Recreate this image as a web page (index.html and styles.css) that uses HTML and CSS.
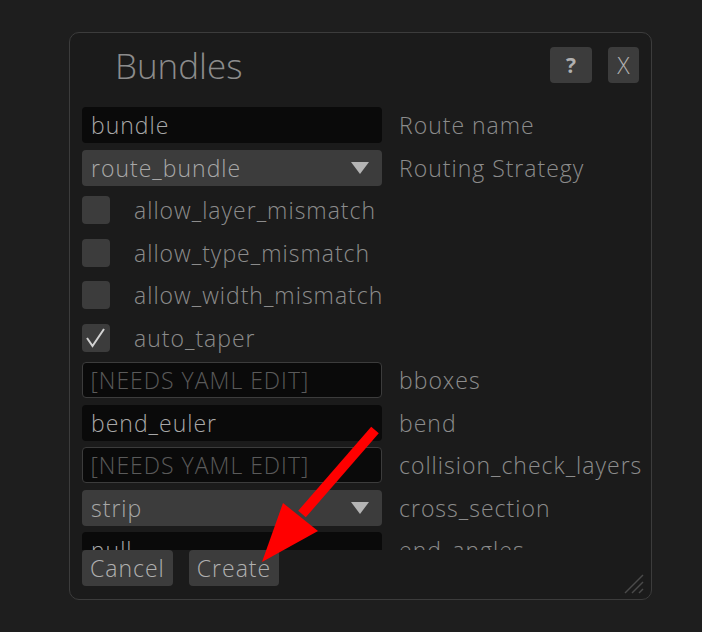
FILE: index.html
```html
<!DOCTYPE html>
<html>
<head>
<meta charset="utf-8">
<link rel="stylesheet" href="styles.css">
</head>
<body>
<div class="window">
  <div class="titlebar">
    <div class="title">Bundles</div>
    <div class="title-buttons">
      <div class="btn help">?</div>
      <div class="btn close">X</div>
    </div>
  </div>
  <div class="scroll">
    <div class="form">
      <div class="field input"><span>bundle</span></div>
      <div class="label">Route name</div>

      <div class="field combo"><span>route_bundle</span><svg class="caret" width="20" height="14" viewBox="0 0 20 14"><polygon points="1,1 19,1 10,13" fill="#b4b4b4"/></svg></div>
      <div class="label">Routing Strategy</div>

      <div class="check-row"><div class="box"></div><span>allow_layer_mismatch</span></div>
      <div class="check-row"><div class="box"></div><span>allow_type_mismatch</span></div>
      <div class="check-row"><div class="box"></div><span>allow_width_mismatch</span></div>
      <div class="check-row"><div class="box"><svg width="28" height="28" viewBox="0 0 28 28"><polyline points="5,14 10.5,22 22,5" fill="none" stroke="#d2d2d2" stroke-width="2"/></svg></div><span>auto_taper</span></div>

      <div class="field input outlined"><span class="ph">[NEEDS YAML EDIT]</span></div>
      <div class="label">bboxes</div>

      <div class="field input"><span>bend_euler</span></div>
      <div class="label">bend</div>

      <div class="field input outlined"><span class="ph">[NEEDS YAML EDIT]</span></div>
      <div class="label">collision_check_layers</div>

      <div class="field combo"><span>strip</span><svg class="caret" width="20" height="14" viewBox="0 0 20 14"><polygon points="1,1 19,1 10,13" fill="#b4b4b4"/></svg></div>
      <div class="label">cross_section</div>

      <div class="field input"><span>null</span></div>
      <div class="label">end_angles</div>
    </div>
  </div>
  <div class="footer">
    <div class="btn action">Cancel</div>
    <div class="btn action">Create</div>
  </div>
  <svg class="grip" width="24" height="24" viewBox="0 0 24 24">
    <line x1="2" y1="22" x2="20" y2="4" stroke="#4a4a4a" stroke-width="1.5"/>
    <line x1="9" y1="22" x2="20" y2="11" stroke="#4a4a4a" stroke-width="1.5"/>
    <line x1="16" y1="22" x2="20" y2="18" stroke="#4a4a4a" stroke-width="1.5"/>
  </svg>
</div>
<svg class="arrow" width="702" height="632" viewBox="0 0 702 632">
  <line x1="375" y1="430" x2="302" y2="514" stroke="#ff0000" stroke-width="10"/>
  <polygon points="283,503 318,531 262,562" fill="#ff0000"/>
</svg>
</body>
</html>
```

FILE: styles.css
```css
html, body {
  margin: 0;
  padding: 0;
  background: #1e1e1e;
  width: 702px;
  height: 632px;
  overflow: hidden;
  font-family: "Open Sans", "Noto Sans", sans-serif;
  font-weight: 300;
}

.window {
  position: relative;
  margin: 32px 0 0 69px;
  width: 581px;
  height: 566px;
  border: 1.5px solid #3c3c3c;
  border-radius: 10px;
  background: #1b1b1b;
  box-sizing: content-box;
}

.titlebar {
  display: flex;
  justify-content: space-between;
  align-items: flex-start;
  padding: 14px 12px 0 45px;
  height: 62px;
  box-sizing: border-box;
}

.title {
  font-size: 35px;
  color: #8c8c8c;
  line-height: 40px;
  margin-top: -1px;
}

.title-buttons {
  display: flex;
  gap: 16px;
}

.btn {
  background: #3c3c3c;
  border-radius: 4px;
  height: 36px;
  display: flex;
  align-items: center;
  justify-content: center;
  color: #b0b0b0;
}

.help {
  width: 42px;
  font-weight: 700;
  font-size: 21px;
}

.close {
  width: 31px;
  font-size: 23px;
}

.scroll {
  margin: 12px 0 0 12px;
  height: 443px;
  overflow: hidden;
}

.form {
  display: grid;
  grid-template-columns: 300px auto;
  column-gap: 17px;
  row-gap: 6.5px;
  grid-auto-rows: 36px;
  align-items: center;
  letter-spacing: 1px;
}

.field {
  height: 36px;
  border-radius: 4px;
  box-sizing: border-box;
  display: flex;
  align-items: center;
  padding: 0 9px;
  font-size: 23px;
  color: #a8a8a8;
}

.input {
  background: #0a0a0a;
}

.outlined {
  border: 1.5px solid #3c3c3c;
  padding-left: 7.5px;
}

.ph {
  color: #5a5a5a;
}

.combo {
  background: #3c3c3c;
  justify-content: space-between;
  padding-right: 12px;
}

.label {
  font-size: 23px;
  color: #8c8c8c;
  white-space: nowrap;
}

.check-row {
  grid-column: 1 / 3;
  display: flex;
  align-items: center;
  gap: 24px;
  font-size: 23px;
  color: #8c8c8c;
}

.box {
  width: 28px;
  height: 28px;
  border-radius: 4px;
  background: #3c3c3c;
}

.box svg {
  display: block;
}

.footer {
  display: flex;
  gap: 16px;
  margin: 0 0 0 12px;
}

.action {
  padding: 0 8px;
  font-size: 23px;
  letter-spacing: 1px;
}

.grip {
  position: absolute;
  right: 4px;
  bottom: 4px;
}

.arrow {
  position: absolute;
  left: 0;
  top: 0;
  pointer-events: none;
}
```
